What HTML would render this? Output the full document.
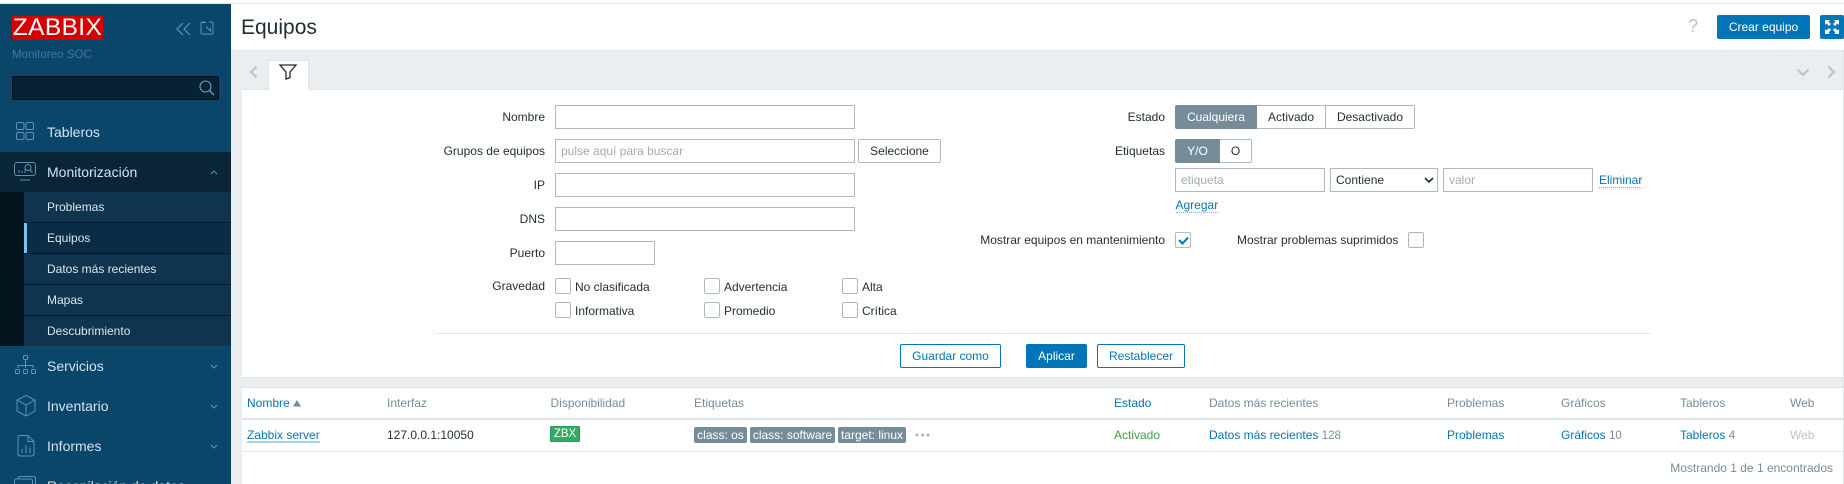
<!DOCTYPE html>
<html lang="es"><head><meta charset="utf-8"><title>Equipos</title>
<style>
html,body{margin:0;padding:0;width:1844px;height:484px;overflow:hidden;background:#ebeef0}
body{position:relative;font:12px/14px "Liberation Sans",sans-serif;color:#1f2c33}
.a{position:absolute;white-space:nowrap}
.r{position:absolute;white-space:nowrap;text-align:right;right:1299px;line-height:24px;height:24px}
.i{position:absolute;box-sizing:border-box;background:#fff;border:1px solid #acbbc2;height:24px;line-height:22px;padding-left:5px;color:#a3abb0}
.c{position:absolute;box-sizing:border-box;width:16px;height:16px;background:#fff;border:1px solid #acbbc2;border-radius:2px}
.b{position:absolute;box-sizing:border-box;height:24px;line-height:22px;text-align:center;border-radius:2px}
.bl{border:1px solid #0275b8;color:#0275b8;background:#fff}
.s{position:absolute;box-sizing:border-box;height:24px;line-height:22px;text-align:center;background:#fff;border:1px solid #acbbc2;color:#1f2c33}
.on{background:#768d99;border-color:#768d99;color:#fff}
.m{position:absolute;left:47px;font-size:14px;line-height:16px;color:#d3e3ef;white-space:nowrap}
.sub{position:absolute;left:24px;width:207px;height:30px;line-height:30px;background:#0e344e;color:#dbe6ee;text-indent:23px}
.sep{position:absolute;left:24px;width:207px;height:1px;background:#04192a}
.h{position:absolute;top:396px;line-height:14px;color:#768d99;white-space:nowrap}
.d{position:absolute;top:428px;line-height:14px;white-space:nowrap}
.l{color:#0275b8}
.g{color:#768d99}
.t{position:absolute;top:427px;height:16px;line-height:16px;background:#768d99;color:#fff;text-align:center;border-radius:2px}
svg{position:absolute;overflow:visible}
.ic{fill:none;stroke:#5f93b5;stroke-width:1}
.ch{fill:none;stroke:#5f93b5;stroke-width:1}
</style></head><body>
<div class="a" style="left:0;top:0;width:1844px;height:3px;background:#fff"></div>
<div class="a" style="left:0;top:3px;width:1844px;height:1px;background:#e2e5e7"></div>
<!-- Sidebar -->
<div class="a" style="left:0;top:4px;width:231px;height:480px;background:#0a466a"></div>
<div class="a" style="left:12px;top:16px;width:91px;height:24px;background:#d40000;color:#fff;font-size:24.5px;line-height:24px;text-align:center;letter-spacing:.4px">ZABBIX</div>
<svg style="left:176px;top:22px" width="16" height="14"><path d="M7 1L1 7l6 6M14 1L8 7l6 6" fill="none" stroke="#5f93b5" stroke-width="1.200"/></svg>
<svg style="left:200px;top:21px" width="14" height="14"><path d="M5 1H2.500Q1 1 1 2.500V11.500Q1 13 2.500 13H11.500Q13 13 13 11.500V2.500Q13 1 11.500 1H9M1.500 1.500H6M6 5.500L10.500 10V6.500M6 5.500L10 9.500" class="ic"/></svg>
<div class="a" style="left:12px;top:48px;font-size:11.600px;color:#44779a">Monitoreo SOC</div>
<div class="a" style="left:12px;top:76px;width:207px;height:24px;box-sizing:border-box;background:#082235;border:1px solid #03121d;border-radius:2px"></div>
<svg style="left:199px;top:80px" width="16" height="16"><circle cx="6.500" cy="6.500" r="5.500" fill="none" stroke="#6a9cbd" stroke-width="1.100"/><path d="M10.500 10.500L15 15" stroke="#6a9cbd" stroke-width="1.400"/></svg>
<svg style="left:16px;top:122px" width="18" height="18" class="ic"><rect x=".5" y=".5" width="7.500" height="7" rx="1.500"/><rect x="10" y=".5" width="7.500" height="7" rx="1.500"/><rect x=".5" y="10.500" width="7.500" height="7" rx="1.500"/><rect x="10" y="10.500" width="7.500" height="7" rx="1.500"/></svg>
<div class="m" style="top:124px">Tableros</div>
<div class="a" style="left:0;top:152px;width:231px;height:40px;background:#0a2538"></div>
<svg style="left:14px;top:162px" width="22" height="19" class="ic"><rect x=".5" y=".5" width="21" height="13" rx="2.500"/><path d="M5 11V8M8 11V9M11 11V7"/><circle cx="14" cy="5.500" r="3"/><path d="M16 8l2.500 2.500M6 18H16"/></svg>
<div class="m" style="top:164px;color:#cfe6f7">Monitorización</div>
<svg style="left:210px;top:170px" width="8" height="5"><path d="M1 4L4 1l3 3" class="ch"/></svg>
<div class="a" style="left:0;top:192px;width:24px;height:154px;background:#04141f"></div>
<div class="a" style="left:24px;top:192px;width:207px;height:154px;background:#0e344e"></div>
<div class="sub" style="top:192px">Problemas</div><div class="sep" style="top:222px"></div>
<div class="sub" style="top:223px;background:#0a2d45">Equipos</div><div class="a" style="left:24px;top:223px;width:3px;height:30px;background:#76c4f7"></div><div class="sep" style="top:253px"></div>
<div class="sub" style="top:254px">Datos más recientes</div><div class="sep" style="top:284px"></div>
<div class="sub" style="top:285px">Mapas</div><div class="sep" style="top:315px"></div>
<div class="sub" style="top:316px">Descubrimiento</div>
<svg style="left:15px;top:355px" width="22" height="21" class="ic"><rect x="8.500" y=".5" width="4" height="4" rx="1"/><path d="M10.500 4.500V13M3 13V10.500H18V13"/><rect x=".5" y="14.500" width="4" height="4" rx="1"/><rect x="8.500" y="14.500" width="4" height="4" rx="1"/><rect x="16.500" y="14.500" width="4" height="4" rx="1"/></svg>
<div class="m" style="top:358px">Servicios</div>
<svg style="left:210px;top:364px" width="8" height="5"><path d="M1 1l3 3 3-3" class="ch"/></svg>
<svg style="left:16px;top:395px" width="20" height="22" class="ic"><path d="M10 .5L19 5V16L10 21 1 16V5ZM1 5l9 5 9-5M10 10V21"/></svg>
<div class="m" style="top:398px">Inventario</div>
<svg style="left:210px;top:404px" width="8" height="5"><path d="M1 1l3 3 3-3" class="ch"/></svg>
<svg style="left:17px;top:435px" width="18" height="22" class="ic"><path d="M3 .5H11L17 6.500V18.500Q17 21 14.500 21H3.500Q1 21 1 18.500V3Q1 .5 3 .5ZM11 .5V6.500H17M5 18V14M9 18V10M13 18V12"/></svg>
<div class="m" style="top:438px">Informes</div>
<svg style="left:210px;top:444px" width="8" height="5"><path d="M1 1l3 3 3-3" class="ch"/></svg>
<svg style="left:14px;top:476px" width="22" height="18" class="ic"><path d="M4 3V2Q4 .5 5.500 .5H20Q21.500 .5 21.500 2V12"/><rect x=".5" y="3" width="18" height="14" rx="2"/></svg>
<div class="m" style="top:478px">Recopilación de datos</div>
<!-- Header -->
<div class="a" style="left:231px;top:4px;width:1613px;height:46px;background:#fff;border-bottom:1px solid #dfe4e7"></div>
<div class="a" style="left:241px;top:15px;font-size:21px;line-height:26px;color:#1f2c33">Equipos</div>
<div class="a" style="left:1688px;top:15px;font-size:18px;line-height:22px;color:#b5c2c9">?</div>
<div class="b" style="left:1717px;top:15px;width:93px;background:#0275b8;color:#fff;line-height:24px">Crear equipo</div>
<div class="b" style="left:1820px;top:15px;width:24px;background:#0275b8"></div>
<svg style="left:1824px;top:19px" width="16" height="16"><path d="M1 1H6L4.500 2.500 7 5 5 7 2.500 4.500 1 6ZM15 1H10L11.500 2.500 9 5 11 7 13.500 4.500 15 6ZM1 15H6L4.500 13.500 7 11 5 9 2.500 11.500 1 10ZM15 15H10L11.500 13.500 9 11 11 9 13.500 11.500 15 10Z" fill="#fff"/></svg>
<!-- Tabs -->
<svg style="left:249px;top:65px" width="9" height="14"><path d="M7.500 1.500L2 7l5.500 5.500" fill="none" stroke="#b9c6ce" stroke-width="2.200"/></svg>
<div class="a" style="left:268px;top:60px;width:41px;height:31px;box-sizing:border-box;background:#fff;border:1px solid #dfe4e7;border-bottom:0"></div>
<svg style="left:279px;top:64px" width="18" height="16"><path d="M1 1H17L11 8V13.500L7 15V8Z" fill="none" stroke="#1f2c33" stroke-width="1.300"/></svg>
<svg style="left:1796px;top:68px" width="14" height="9"><path d="M1.500 1.500L7 7l5.500-5.500" fill="none" stroke="#b9c6ce" stroke-width="2.200"/></svg>
<svg style="left:1827px;top:65px" width="9" height="14"><path d="M1.500 1.500L7 7l-5.500 5.500" fill="none" stroke="#b9c6ce" stroke-width="2.200"/></svg>
<!-- Filter panel -->
<div class="a" style="left:242px;top:89px;width:1601px;height:289px;box-sizing:border-box;background:#fff;border:1px solid #dfe4e7;border-width:1px 0 1px 0"></div>
<div class="a" style="left:269px;top:88px;width:39px;height:3px;background:#fff"></div>
<div class="r" style="top:105px">Nombre</div><div class="i" style="left:555px;top:105px;width:300px"></div>
<div class="r" style="top:139px">Grupos de equipos</div><div class="i" style="left:555px;top:139px;width:300px">pulse aquí para buscar</div>
<div class="b" style="left:858px;top:139px;width:83px;border:1px solid #acbbc2;background:#fff">Seleccione</div>
<div class="r" style="top:173px">IP</div><div class="i" style="left:555px;top:173px;width:300px"></div>
<div class="r" style="top:207px">DNS</div><div class="i" style="left:555px;top:207px;width:300px"></div>
<div class="r" style="top:241px">Puerto</div><div class="i" style="left:555px;top:241px;width:100px"></div>
<div class="r" style="top:274px">Gravedad</div>
<div class="c" style="left:555px;top:278px"></div><div class="a" style="left:575px;top:280px">No clasificada</div>
<div class="c" style="left:704px;top:278px"></div><div class="a" style="left:724px;top:280px">Advertencia</div>
<div class="c" style="left:842px;top:278px"></div><div class="a" style="left:862px;top:280px">Alta</div>
<div class="c" style="left:555px;top:302px"></div><div class="a" style="left:575px;top:304px">Informativa</div>
<div class="c" style="left:704px;top:302px"></div><div class="a" style="left:724px;top:304px">Promedio</div>
<div class="c" style="left:842px;top:302px"></div><div class="a" style="left:862px;top:304px">Crítica</div>
<!-- right column -->
<div class="a" style="right:679px;top:105px;line-height:24px">Estado</div>
<div class="s on" style="left:1175px;top:105px;width:82px;border-radius:2px 0 0 2px">Cualquiera</div>
<div class="s" style="left:1257px;top:105px;width:69px;border-left:0">Activado</div>
<div class="s" style="left:1325px;top:105px;width:90px;border-radius:0 2px 2px 0">Desactivado</div>
<div class="a" style="right:679px;top:139px;line-height:24px">Etiquetas</div>
<div class="s on" style="left:1175px;top:139px;width:45px;border-radius:2px 0 0 2px">Y/O</div>
<div class="s" style="left:1220px;top:139px;width:32px;border-left:0;border-radius:0 2px 2px 0">O</div>
<div class="i" style="left:1175px;top:168px;width:150px">etiqueta</div>
<div class="i" style="left:1330px;top:168px;width:108px;color:#1f2c33">Contiene</div>
<svg style="left:1424px;top:177px" width="10" height="7"><path d="M1 1l4 4 4-4" fill="none" stroke="#1f2c33" stroke-width="1.600"/></svg>
<div class="i" style="left:1443px;top:168px;width:150px">valor</div>
<div class="a l" style="left:1599px;top:173px;border-bottom:1px dotted #7fb6d8;line-height:14px">Eliminar</div>
<div class="a l" style="left:1175.500px;top:198px;border-bottom:1px dotted #7fb6d8;line-height:14px">Agregar</div>
<div class="a" style="right:679px;top:233px">Mostrar equipos en mantenimiento</div>
<div class="c" style="left:1175px;top:232px"></div>
<svg style="left:1178px;top:236px" width="11" height="9"><path d="M1 4l3.500 3.500L10 1.500" fill="none" stroke="#0275b8" stroke-width="2"/></svg>
<div class="a" style="left:1237px;top:233px">Mostrar problemas suprimidos</div>
<div class="c" style="left:1408px;top:232px"></div>
<div class="a" style="left:435px;top:333px;width:1216px;height:1px;background:#e6e9eb"></div>
<div class="b bl" style="left:900px;top:344px;width:101px">Guardar como</div>
<div class="b" style="left:1026px;top:344px;width:61px;background:#0275b8;color:#fff;line-height:24px">Aplicar</div>
<div class="b bl" style="left:1097px;top:344px;width:88px">Restablecer</div>
<!-- Table -->
<div class="a" style="left:242px;top:387px;width:1601px;height:97px;background:#fff;border-top:1px solid #dfe4e7;box-sizing:border-box"></div>
<div class="a" style="left:242px;top:418px;width:1601px;height:2px;background:#dfe4e7"></div>
<div class="a" style="left:242px;top:451px;width:1601px;height:1px;background:#e8ebed"></div>
<div class="h l" style="left:247px">Nombre</div>
<svg style="left:293px;top:400px" width="8" height="7"><path d="M0 6.500L4 0 8 6.500Z" fill="#768d99"/></svg>
<div class="h" style="left:387px">Interfaz</div>
<div class="h" style="left:550.500px">Disponibilidad</div>
<div class="h" style="left:694px">Etiquetas</div>
<div class="h l" style="left:1114px">Estado</div>
<div class="h" style="left:1209px">Datos más recientes</div>
<div class="h" style="left:1447px">Problemas</div>
<div class="h" style="left:1561px">Gráficos</div>
<div class="h" style="left:1680px">Tableros</div>
<div class="h" style="left:1790px">Web</div>
<div class="d l" style="left:247px;height:13px;border-bottom:2px solid #a9d0e8">Zabbix server</div>
<div class="d" style="left:387px">127.0.0.1:10050</div>
<div class="a" style="left:550px;top:426px;width:30px;height:16px;box-sizing:border-box;background:#34ab64;border:1px solid #2c9d58;color:#fff;font-size:11.500px;line-height:14px;text-align:center;border-radius:1px">ZBX</div>
<div class="t" style="left:694px;width:53px">class: os</div>
<div class="t" style="left:750px;width:85px">class: software</div>
<div class="t" style="left:838px;width:68px">target: linux</div>
<svg style="left:915px;top:433px" width="16" height="4"><circle cx="2" cy="2" r="1.500" fill="#a9b6bd"/><circle cx="7.500" cy="2" r="1.500" fill="#a9b6bd"/><circle cx="13" cy="2" r="1.500" fill="#a9b6bd"/></svg>
<div class="d" style="left:1114px;color:#429e47">Activado</div>
<div class="d l" style="left:1209px">Datos más recientes <span class="g" style="font-size:11.500px">128</span></div>
<div class="d l" style="left:1447px">Problemas</div>
<div class="d l" style="left:1561px">Gráficos <span class="g" style="font-size:11.500px">10</span></div>
<div class="d l" style="left:1680px">Tableros <span class="g" style="font-size:11.500px">4</span></div>
<div class="d" style="left:1790px;color:#bcc4c9">Web</div>
<div class="a g" style="right:11px;top:461px">Mostrando 1 de 1 encontrados</div>
<div class="a" style="left:1843px;top:50px;width:1px;height:434px;background:#dfe4e7"></div>
</body></html>
